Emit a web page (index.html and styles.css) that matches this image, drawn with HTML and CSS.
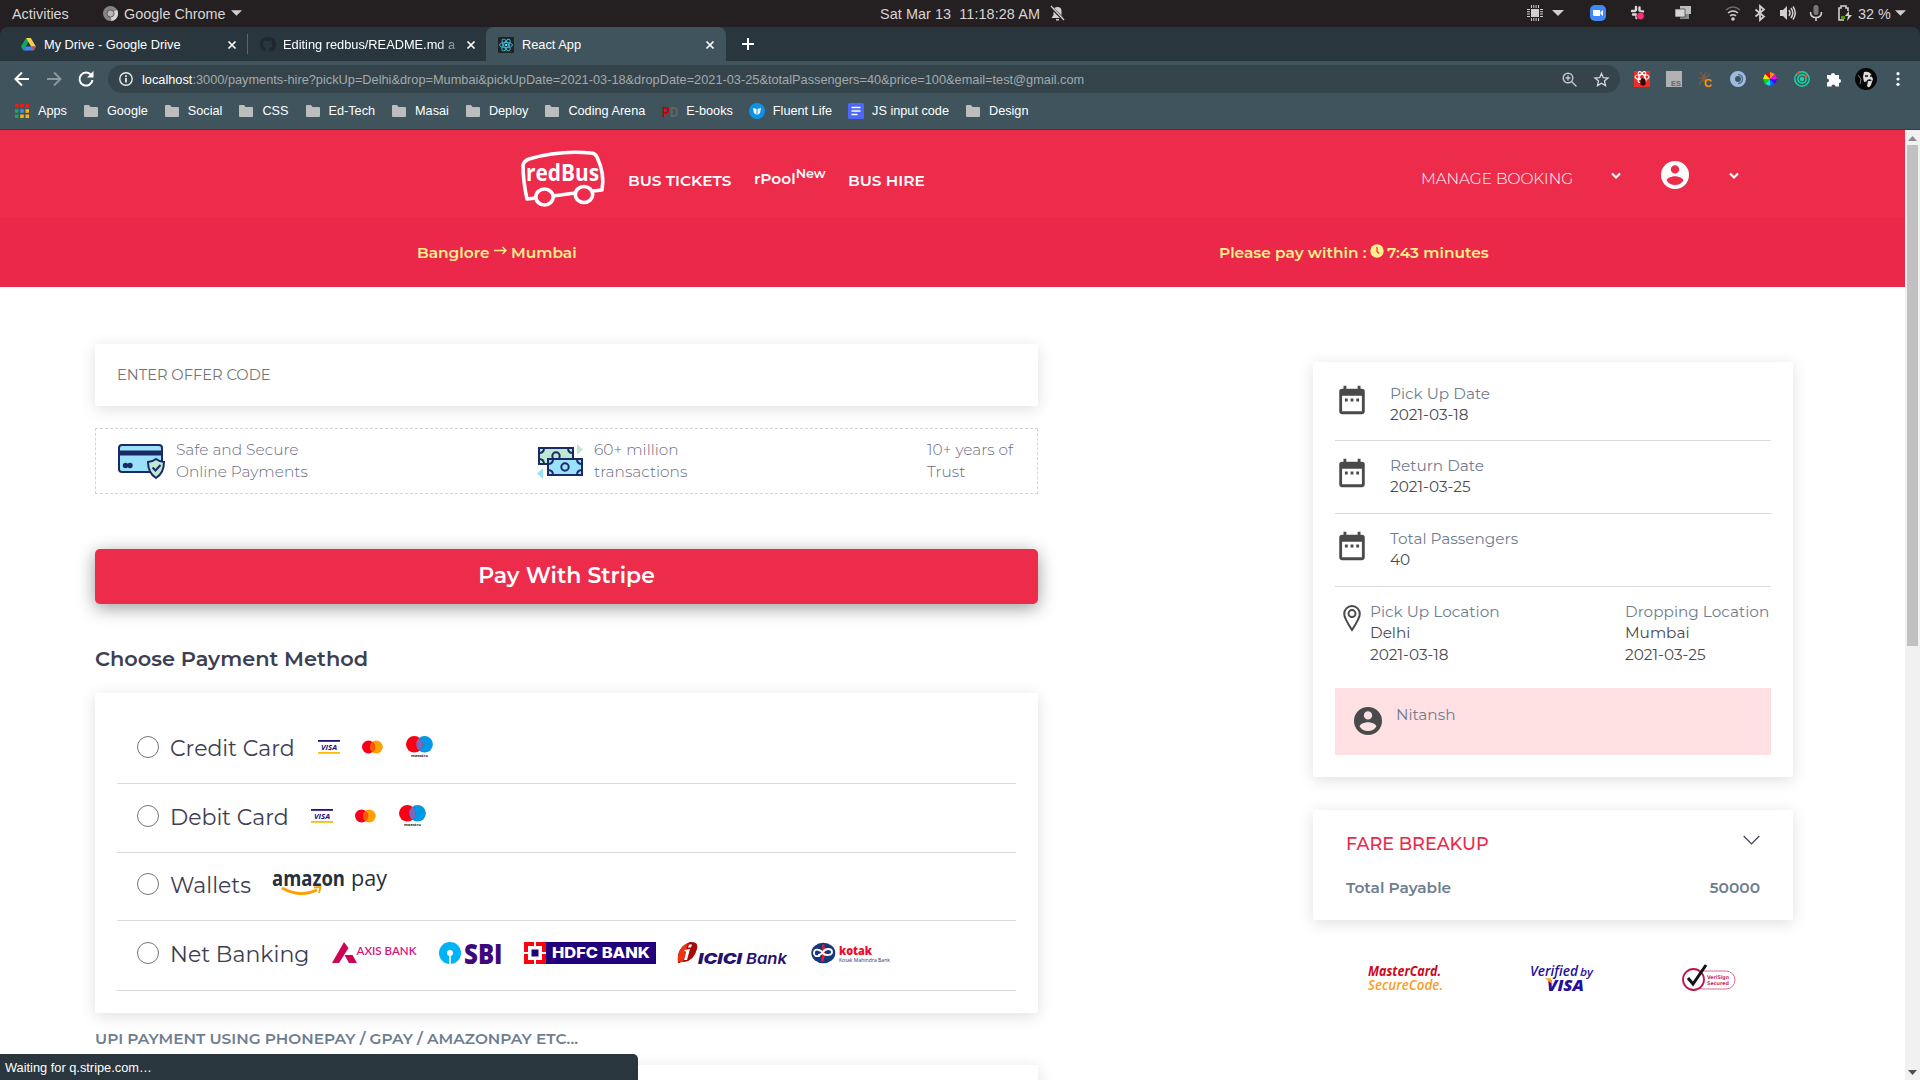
FILE: index.html
```html
<!DOCTYPE html>
<html lang="en">
<head>
<meta charset="utf-8">
<title>React App</title>
<link rel="stylesheet" href="styles.css">
</head>
<body>
<svg class="defs" aria-hidden="true">
  <symbol id="folder" viewBox="0 0 14 14"><path d="M0 2q0-1 1-1h4l1.500 2H13q1 0 1 1v8q0 1-1 1H1q-1 0-1-1z" fill="#bdbdbd"/></symbol>
  <symbol id="close" viewBox="0 0 10 10"><path d="M1.500 1.500l7 7m0-7l-7 7" stroke="#fff" stroke-width="1.700"/></symbol>
  <symbol id="tri" viewBox="0 0 12 8"><path d="M0 1h12L6 7z" fill="#d0cfcf"/></symbol>
  <symbol id="calendar" viewBox="0 0 24 24"><path fill="#4a4a4a" d="M9 11H7v2h2zm4 0h-2v2h2zm4 0h-2v2h2zm2-7h-1V2h-2v2H8V2H6v2H5a2 2 0 0 0-2 2v14a2 2 0 0 0 2 2h14a2 2 0 0 0 2-2V6a2 2 0 0 0-2-2zm0 16H5V9h14z"/></symbol>
  <symbol id="account" viewBox="2 2 20 20"><path fill="currentColor" d="M12 2a10 10 0 1 0 0 20 10 10 0 0 0 0-20zm0 3a3 3 0 1 1 0 6 3 3 0 0 1 0-6zm0 14.200a7.200 7.200 0 0 1-6-3.220c.03-1.990 4-3.080 6-3.080s5.970 1.090 6 3.080a7.200 7.200 0 0 1-6 3.220z"/></symbol>
  <symbol id="down" viewBox="0 0 10 8"><path d="M1 1.500l4 4 4-4" fill="none" stroke="#fff" stroke-width="2.200"/></symbol>
  <symbol id="visa" viewBox="0 0 22 14"><path d="M0 0h22v1.800H0z" fill="#26107a"/><path d="M0 12h22v1.800H0z" fill="#fdbb0a"/><text x="3" y="9.500" textLength="16" lengthAdjust="spacingAndGlyphs" class="logo-visa">VISA</text></symbol>
  <symbol id="mastercard" viewBox="0 0 21 14"><circle cx="14.200" cy="7" r="6.500" fill="#ff9f00"/><circle cx="6.500" cy="7" r="6.500" fill="#f9001a"/><path d="M10.400 1.800a6.500 6.500 0 0 1 0 10.400 6.500 6.500 0 0 1 0-10.400z" fill="#ff5a00"/></symbol>
  <symbol id="maestro" viewBox="0 0 27 22"><circle cx="18.600" cy="8.300" r="8.300" fill="#0099e5"/><circle cx="8.300" cy="8.300" r="8.300" fill="#fb0015"/><path d="M13.400 1.800a8.300 8.300 0 0 1 0 13 8.300 8.300 0 0 1 0-13z" fill="#7a68bd"/><text x="5" y="21" textLength="17" lengthAdjust="spacingAndGlyphs" class="logo-maestro">maestro</text></symbol>
</svg>

<header class="system-bar">
  <span class="activities">Activities</span>
  <svg class="app-icon" viewBox="0 0 16 16"><circle cx="8" cy="8" r="8" fill="#858585"/><path d="M8 8L15 4a8 8 0 0 1-6 12z" fill="#d6d6d6"/><circle cx="8" cy="8" r="3.800" fill="#b8b8b8" stroke="#555"/></svg>
  <span class="app-name">Google Chrome</span>
  <svg class="app-arrow" width="11" height="8"><use href="#tri"/></svg>
  <span class="clock">Sat Mar 13&nbsp; 11:18:28 AM</span>
  <svg class="bell" width="15" height="15" viewBox="0 0 15 15"><path d="M7.500 1a4 4 0 0 1 4 4v4l2 3h-12l2-3V5a4 4 0 0 1 4-4zM6 13h3v1.500H6z" fill="#d0cfcf"/><path d="M0 0l14 14" stroke="#241f21" stroke-width="3"/><path d="M1 0l13 14" stroke="#d0cfcf" stroke-width="1.300"/></svg>
  <div class="tray">
    <svg viewBox="0 0 16 16"><path d="M4 4h8v8H4zM4 0h1v3H4zM6.300 0h1v3h-1zM8.600 0h1v3h-1zM11 0h1v3h-1zM4 13h1v3H4zM6.300 13h1v3h-1zM8.600 13h1v3h-1zM11 13h1v3h-1zM0 4h3v1H0zM0 6.300h3v1H0zM0 8.600h3v1H0zM0 11h3v1H0zM13 4h3v1h-3zM13 6.300h3v1h-3zM13 8.600h3v1h-3zM13 11h3v1h-3z" fill="#d0cfcf"/></svg>
    <svg viewBox="-2 -4 16 16"><path d="M0 1h12L6 7z" fill="#d0cfcf"/></svg>
    <svg viewBox="0 0 16 16"><rect width="16" height="16" rx="5" fill="#4087fc"/><path d="M3 5h7v6H4.500Q3 11 3 9.500zM10.500 7L13 5v6l-2.500-2z" fill="#fff"/></svg>
    <svg viewBox="0 0 16 16"><path d="M6 2v3M9.500 2.500v3M2 6h3M11 6.500h2M3 9.500h3M6.500 10v3" stroke="#dadada" stroke-width="2.400" stroke-linecap="round"/><circle cx="10.500" cy="11" r="3.800" fill="#ff2f73" stroke="#241f21" stroke-width=".6"/></svg>
    <svg viewBox="0 0 16 16"><path d="M5 1h11v8H5z" fill="#bdbdbd"/><path d="M5 9h9v5H5z" fill="#8b8b8b"/><path d="M0 4h10v8H0z" fill="#d5d5d5" stroke="#241f21" stroke-width=".6"/></svg>
    <svg viewBox="0 0 16 16" fill="none" stroke-width="1.600"><path d="M1 5q7-6 14 0" stroke="#6d6a6b"/><path d="M3 8q5-4 10 0M5 11q3-2.500 6 0" stroke="#d0cfcf"/><circle cx="8" cy="14" r="1.800" fill="#d0cfcf"/></svg>
    <svg viewBox="0 0 16 16" fill="none" stroke="#d0cfcf" stroke-width="1.800"><path d="M3.500 4.500l8.500 7L8 15V1l4 3.500-8.500 7"/></svg>
    <svg viewBox="0 0 16 16" fill="none" stroke="#d0cfcf" stroke-width="1.500"><path d="M0 5h3l4-4v14l-4-4H0z" fill="#d0cfcf" stroke="none"/><path d="M9 5q2 3 0 6M11 3q3.500 5 0 10M13 1.500q4.500 6.500 0 13"/></svg>
    <svg viewBox="0 0 16 16" fill="none"><rect x="5.500" y="0" width="5" height="10" rx="2.500" fill="#777"/><path d="M2.500 7q0 5.500 5.500 5.500T13.500 7M8 12v4" stroke="#d0cfcf" stroke-width="1.600"/></svg>
    <svg viewBox="0 0 16 16"><path d="M7 15H2V3h2V1h5v2h2v3" fill="none" stroke="#d0cfcf" stroke-width="1.600"/><path d="M4 11h4v3H4z" fill="#4e9a06"/><path d="M12 6l-4 5h3l-1 5 5-6h-3z" fill="#d0cfcf"/></svg>
    <span class="battery">32 %</span>
    <svg class="last" width="11" height="8"><use href="#tri"/></svg>
  </div>
</header>

<div class="tab-strip">
  <div class="tab tab-drive">
    <svg class="tab-icon" viewBox="0 0 16 16"><path d="M5.500 1h5L5 10.500 2.500 14.500 0 10z" fill="#11a861"/><path d="M5.500 1h5l5.500 9.500h-5z" fill="#ffcf48"/><path d="M5 10h11l-2.500 4.500h-11z" fill="#4285f4"/><path d="M11 10h5l-2.500 4.500z" fill="#ea4335"/></svg>
    <span class="tab-title">My Drive - Google Drive</span>
    <svg width="10" height="10"><use href="#close"/></svg>
  </div>
  <div class="tab tab-github">
    <svg class="tab-icon" viewBox="0 0 16 16"><path fill="#1f282e" d="M8 0a8 8 0 0 0-2.530 15.590c.4.070.55-.17.55-.38v-1.490c-2.010.37-2.530-.49-2.690-.94-.45-1.140-1.130-1.410-.78-1.420.63-.01 1.080.58 1.230.82.720 1.210 1.870.87 2.330.66.070-.52.280-.87.510-1.070-1.780-.2-3.640-.89-3.640-3.950 0-.87.310-1.590.820-2.150-.08-.2-.36-1.020.08-2.120 0 0 .670-.21 2.200.82a7.500 7.500 0 0 1 4 0c1.530-1.040 2.200-.82 2.200-.82.440 1.100.160 1.920.080 2.120.51.56.820 1.270.820 2.150 0 3.070-1.870 3.750-3.650 3.950.29.25.540.730.540 1.480v2.190c0 .210.150.460.550.380A8 8 0 0 0 8 0z"/></svg>
    <span class="tab-title">Editing redbus/README.md a</span>
    <svg width="10" height="10"><use href="#close"/></svg>
  </div>
  <div class="tab tab-active">
    <svg class="tab-icon" viewBox="0 0 16 16"><rect width="16" height="16" rx="1" fill="#222"/><g fill="none" stroke="#3cc3e0" stroke-width=".9"><ellipse cx="8" cy="8" rx="6.500" ry="2.600"/><ellipse cx="8" cy="8" rx="6.500" ry="2.600" transform="rotate(60 8 8)"/><ellipse cx="8" cy="8" rx="6.500" ry="2.600" transform="rotate(120 8 8)"/></g><circle cx="8" cy="8" r="1.300" fill="#5bdcf5"/></svg>
    <span class="tab-title">React App</span>
    <svg width="10" height="10"><use href="#close"/></svg>
  </div>
  <svg class="plus" width="12" height="12"><path d="M6 0v12M0 6h12" stroke="#fff" stroke-width="2"/></svg>
</div>

<div class="toolbar">
  <svg viewBox="0 0 16 16" fill="none" stroke="#fff" stroke-width="2"><path d="M15 8H2M8 1.500L1.500 8 8 14.500"/></svg>
  <svg viewBox="0 0 16 16" fill="none" stroke="#8b989e" stroke-width="2"><path d="M1 8h13M8 1.500L14.500 8 8 14.500"/></svg>
  <svg viewBox="0 0 16 16" fill="none" stroke="#fff" stroke-width="2"><path d="M13.500 4.500A6.500 6.500 0 1 0 14.500 9"/><path d="M15.500 0v6.500H9z" fill="#fff" stroke="none"/></svg>
  <div class="omnibox">
    <svg width="14" height="14" viewBox="0 0 14 14"><circle cx="7" cy="7" r="6.200" fill="none" stroke="#e8eaeb" stroke-width="1.400"/><path d="M6.200 6h1.600v4.500H6.200zM6.200 3.300h1.600v1.600H6.200z" fill="#fff"/></svg>
    <span class="url"><b>localhost</b>:3000/payments-hire?pickUp=Delhi&amp;drop=Mumbai&amp;pickUpDate=2021-03-18&amp;dropDate=2021-03-25&amp;totalPassengers=40&amp;price=100&amp;email=test@gmail.com</span>
    <svg width="15" height="15" viewBox="0 0 15 15" fill="none" stroke="#c3c8ca" stroke-width="1.400"><circle cx="6" cy="6" r="4.800"/><path d="M9.500 9.500l5 5M3.500 6h5M6 3.500v5"/></svg>
    <svg class="star" width="15" height="15" viewBox="0 0 15 15" fill="none" stroke="#d5d9da" stroke-width="1.300"><path d="M7.500 1.500l1.800 4.200 4.700.4-3.500 3 1 4.500-4-2.400-4 2.400 1-4.500-3.500-3 4.700-.4z"/></svg>
  </div>
  <div class="extensions">
    <svg viewBox="0 0 16 16"><path d="M0 0h16v16H0z" fill="#f02c27"/><g fill="none" stroke="#fff" stroke-width="1.200"><ellipse cx="8" cy="6" rx="7" ry="2.500"/><ellipse cx="8" cy="6" rx="6" ry="2.500" transform="rotate(60 8 6)"/><ellipse cx="8" cy="6" rx="6" ry="2.500" transform="rotate(120 8 6)"/></g><ellipse cx="9" cy="11" rx="2.800" ry="3.800" fill="#2b0b08"/></svg>
    <svg viewBox="0 0 16 16"><path d="M0 0h16v16H0z" fill="#b1b1b1"/><text x="5" y="14.500" textLength="10" lengthAdjust="spacingAndGlyphs" class="ext-es">ES</text></svg>
    <svg viewBox="0 0 16 16"><path d="M2 1l3 4M8 1L6 5M0 7h4M1 14l3-5M12 3L8 6" stroke="#7a5c48" stroke-width="1.200"/><ellipse cx="6" cy="7.500" rx="2.500" ry="3.500" fill="#80583e"/><text x="6" y="15.500" class="ext-c">C</text></svg>
    <svg viewBox="0 0 16 16"><circle cx="8" cy="8" r="5.500" fill="none" stroke="#9fbbdc" stroke-width="5"/><path d="M8 3.500a4.500 4.500 0 0 1 0 9" fill="none" stroke="#4c6f9d" stroke-width="1.500"/></svg>
    <svg viewBox="0 0 16 16"><path d="M8 8V1l5 2z" fill="#f90"/><path d="M8 8V1L3 3z" fill="#f00"/><path d="M8 8L3 3 1 8z" fill="#e6f000"/><path d="M8 8H1l2 5z" fill="#0d0"/><path d="M8 8l-5 5 5 2z" fill="#0ec"/><path d="M8 8v7l5-2z" fill="#06f"/><path d="M8 8l5 5 2-5z" fill="#40f"/><path d="M8 8h7l-2-5z" fill="#f0f"/></svg>
    <svg viewBox="0 0 16 16" fill="none" stroke="#16d5a6" stroke-width="1.500"><circle cx="8" cy="8" r="7.200"/><circle cx="8" cy="8" r="4.200"/><circle cx="8" cy="8" r="1.500" fill="#16d5a6"/><circle cx="4.500" cy="2" r="1.500" fill="#f4511e" stroke="none"/><circle cx="12" cy="5" r="1.500" fill="#f4511e" stroke="none"/></svg>
    <svg viewBox="0 0 16 16"><path d="M1 4h4a2 2 0 1 1 4 0h4v4a2 2 0 1 1 0 4v3.500H9.500a2 2 0 1 0-4 0H1v-4a2 2 0 1 0 0-4z" fill="#fff"/></svg>
    <svg class="avatar" viewBox="0 0 22 22"><circle cx="11" cy="11" r="11" fill="#070707"/><path d="M9 4q7-1 8 5l1 2-2 6q-2 4-4 1l1-5-4 1-1-5z" fill="#ddd"/><path d="M10 8h3M15 8h2M12 13q3-2 4 0" stroke="#111" stroke-width="1.500"/><path d="M3 7l3 4-1 5" stroke="#777" fill="none"/></svg>
    <svg viewBox="0 0 16 16" fill="#fff"><circle cx="8" cy="2.700" r="1.600"/><circle cx="8" cy="8" r="1.600"/><circle cx="8" cy="13.300" r="1.600"/></svg>
  </div>
</div>

<nav class="bookmarks">
  <a class="apps"><svg viewBox="0 0 14 14"><path d="M0 0h3.500v3.500H0zM5.200 0h3.500v3.500H5.200zM10.500 0H14v3.500h-3.500z" fill="#ee1c12"/><path d="M0 5.200h3.500v3.500H0zM0 10.500h3.500V14H0z" fill="#1da462"/><path d="M5.200 5.200h3.500v3.500H5.200z" fill="#4688f1"/><path d="M10.500 5.200H14v3.500h-3.500zM5.200 10.500h3.500V14H5.200zM10.500 10.500H14V14h-3.500z" fill="#fbb30d"/></svg>Apps</a>
  <a><svg><use href="#folder"/></svg>Google</a>
  <a><svg><use href="#folder"/></svg>Social</a>
  <a><svg><use href="#folder"/></svg>CSS</a>
  <a><svg><use href="#folder"/></svg>Ed-Tech</a>
  <a><svg><use href="#folder"/></svg>Masai</a>
  <a><svg><use href="#folder"/></svg>Deploy</a>
  <a><svg><use href="#folder"/></svg>Coding Arena</a>
  <a class="wide"><svg viewBox="0 0 16 16"><text x="0" y="13.500" textLength="8" lengthAdjust="spacingAndGlyphs" class="pd-p">P</text><text x="8" y="13.500" textLength="8" lengthAdjust="spacingAndGlyphs" class="pd-d">D</text></svg>E-books</a>
  <a class="wide"><svg viewBox="0 0 16 16"><circle cx="8" cy="8" r="8" fill="#0d92e8"/><path d="M4 5l3.500 1v6L5 10zM12 5L8.500 6v6l2.500-2z" fill="#fff"/></svg>Fluent Life</a>
  <a class="wide"><svg viewBox="0 0 16 16"><rect width="16" height="16" rx="1.500" fill="#4d67fb"/><path d="M3.500 4.500h9M3.500 8h9M3.500 11.500h6" stroke="#fff" stroke-width="1.700"/></svg>JS input code</a>
  <a><svg><use href="#folder"/></svg>Design</a>
</nav>

<div class="viewport">
  <div class="page">
    <div class="site-nav">
      <svg class="logo" viewBox="0 0 84 56"><g fill="none" stroke="#fff" stroke-width="3.600" stroke-linejoin="round"><path d="M15 47L6 48Q2 30 2 14Q3 10 8 8Q38-1 70 2Q74 2 76 6Q84 23 81 39L72 40"/><path d="M32 45L54 42"/><ellipse cx="23.500" cy="46" rx="8.700" ry="8"/><ellipse cx="63" cy="43.500" rx="8.700" ry="8"/></g><text x="5" y="29.500" textLength="73" lengthAdjust="spacingAndGlyphs" class="logo-red">redBus</text></svg>
      <a class="nav-tickets">BUS TICKETS</a>
      <a class="nav-rpool">rPool<sup>New</sup></a>
      <a class="nav-hire">BUS HIRE</a>
      <a class="nav-manage">MANAGE BOOKING</a>
      <svg class="nav-down" width="10" height="8"><use href="#down"/></svg>
      <svg class="nav-user" width="28" height="28"><use href="#account"/></svg>
      <svg class="nav-down" width="10" height="8"><use href="#down"/></svg>
    </div>
    <div class="trip-bar">
      <span class="from">Banglore</span>
      <svg width="13" height="9" viewBox="0 0 13 9" fill="none" stroke="#fff08b" stroke-width="1.400"><path d="M0 4.500h12M8.500 1L12 4.500 8.500 8"/></svg>
      <span class="to">Mumbai</span>
      <span class="within">Please pay within :</span>
      <svg width="14" height="14" viewBox="0 0 14 14"><circle cx="7" cy="7" r="6.700" fill="#fff08b"/><path d="M7 3v4.500l2 2" fill="none" stroke="#eb2849" stroke-width="1.200"/></svg>
      <span class="left-time">7:43 minutes</span>
    </div>

    <main class="columns">
      <section class="payment">
        <div class="card offer">ENTER OFFER CODE</div>
        <div class="trust">
          <svg width="47" height="35" viewBox="0 0 47 35"><rect x="1" y="1" width="43" height="27" rx="3" fill="#9ce1fb" stroke="#1b2a66" stroke-width="2"/><path d="M1 6.500h43v5H1z" fill="#1b2a66"/><circle cx="7.500" cy="21.500" r="2.700" fill="#1b2a66"/><circle cx="12" cy="21.500" r="2.700" fill="#1b2a66"/><path d="M38 15q4 3 8 3 0 11-8 16-8-5-8-16 4 0 8-3z" fill="#bde9d4" stroke="#1b2a66" stroke-width="2"/><path d="M34.500 23.500l3 3 5-5.500" fill="none" stroke="#1b2a66" stroke-width="2"/></svg>
          <span class="trust-secure">Safe and Secure<br>Online Payments</span>
          <svg width="46" height="36" viewBox="0 0 46 36"><path d="M40 0l6 5.500-6 5.500z" fill="#bde9d4"/><path d="M6 24v11L0 29.500z" fill="#9ce1fb"/><g stroke="#1b2a66" stroke-width="2" fill="none"><path d="M2 4h34v16H2z" fill="#bde9d4"/><path d="M2 9q5 0 5-5M36 9q-5 0-5-5M2 15q5 0 5 5"/><circle cx="19" cy="12" r="3.700"/><path d="M11 15h34v16H11z" fill="#9ce1fb"/><path d="M11 20q5 0 5-5M45 20q-5 0-5-5M11 26q5 0 5 5M45 26q-5 0-5 5"/><circle cx="28" cy="23" r="3.700"/></g></svg>
          <span class="trust-million">60+ million<br>transactions</span>
          <span class="trust-years">10+ years of<br>Trust</span>
        </div>
        <button class="stripe">Pay With Stripe</button>
        <h2>Choose Payment Method</h2>
        <div class="card methods">
          <label class="method"><i class="radio"></i><span class="credit">Credit Card</span><svg class="m-visa"><use href="#visa"/></svg><svg class="m-master"><use href="#mastercard"/></svg><svg class="m-maestro"><use href="#maestro"/></svg></label>
          <label class="method"><i class="radio"></i><span class="debit">Debit Card</span><svg class="m-visa"><use href="#visa"/></svg><svg class="m-master"><use href="#mastercard"/></svg><svg class="m-maestro"><use href="#maestro"/></svg></label>
          <label class="method method-short"><i class="radio"></i><span class="wallets">Wallets</span><svg class="m-amazon" viewBox="0 0 116 26"><text x="0" y="14.500" textLength="73" lengthAdjust="spacingAndGlyphs" class="logo-amazon">amazon</text><text x="79" y="14.500" textLength="36" lengthAdjust="spacingAndGlyphs" class="logo-pay">pay</text><path d="M10 17q18 10 35 2" fill="none" stroke="#ff9f00" stroke-width="2.800"/><path d="M42 16.500l6.500-.5-1.500 6" fill="none" stroke="#ff9f00" stroke-width="1.800"/></svg></label>
          <label class="method"><i class="radio"></i><span class="netbank">Net Banking</span>
            <svg class="m-axis" viewBox="0 0 85 22"><path d="M12 0l4.500 6-9.500 15H0z" fill="#cf0355"/><path d="M12.500 13h8L25 21h-8z" fill="#cf0355"/><text x="24.500" y="13" textLength="60" lengthAdjust="spacingAndGlyphs" class="logo-axis">AXIS BANK</text></svg>
            <svg class="m-sbi" viewBox="0 0 63 22"><circle cx="11" cy="11" r="11" fill="#00b2f6"/><circle cx="11" cy="11" r="3" fill="#fff"/><path d="M10.200 11h1.600v11h-1.600z" fill="#fff"/><text x="25" y="21.500" textLength="38.500" lengthAdjust="spacingAndGlyphs" class="logo-sbi">SBI</text></svg>
            <svg class="m-hdfc" viewBox="0 0 132 22"><path d="M0 0h132v22H0z" fill="#22007c"/><path d="M0 0h22v22H0z" fill="#fb0410"/><path d="M4 4h14v14H4zM10 0h2v22h-2zM0 10h22v2H0z" fill="#fff"/><path d="M7.500 7.500h7v7h-7z" fill="#22007c"/><text x="28" y="16.300" textLength="98" lengthAdjust="spacingAndGlyphs" class="logo-hdfc">HDFC BANK</text></svg>
            <svg class="m-icici" viewBox="0 0 110 22"><path d="M0 21Q-2 5 12 0 21-1 19 7 16 19 6 20q-3-1-4 1z" fill="#a70a08"/><path d="M0 20Q-1 6 10 1L5 20q-3-1-5 0z" fill="#ef3510"/><path d="M6 8l6-1-3 11H6l2-8zM11 2.500h3l-1 3h-3z" fill="#fff"/><text x="20" y="21.500" textLength="44" lengthAdjust="spacingAndGlyphs" class="logo-icici">ICICI</text><text x="68" y="21.500" textLength="41" lengthAdjust="spacingAndGlyphs" class="logo-bank">Bank</text></svg>
            <svg class="m-kotak" viewBox="0 0 80 22"><ellipse cx="12.300" cy="11" rx="12" ry="10.300" fill="#17377c"/><path d="M12 2.500q2 8-1 17" fill="none" stroke="#ed1c24" stroke-width="2.500"/><path d="M9 13.500q-6 2-6-2.500t5-3q3 1 4 3t4 2q5 0 5-3t-4-3q-3 0-5 3t-5 3" fill="none" stroke="#fff" stroke-width="1.900"/><text x="28" y="13" textLength="33" lengthAdjust="spacingAndGlyphs" class="logo-kotak">kotak</text><text x="28" y="20" textLength="51" lengthAdjust="spacingAndGlyphs" class="logo-mahindra">Kotak Mahindra Bank</text></svg>
          </label>
        </div>
        <p class="upi">UPI PAYMENT USING PHONEPAY / GPAY / AMAZONPAY ETC...</p>
        <div class="card upi-card"></div>
      </section>

      <aside class="summary">
        <div class="card details">
          <div class="date-row"><svg width="34" height="34"><use href="#calendar"/></svg><p><em>Pick Up Date</em>2021-03-18</p></div>
          <div class="date-row"><svg width="34" height="34"><use href="#calendar"/></svg><p><em>Return Date</em>2021-03-25</p></div>
          <div class="date-row"><svg width="34" height="34"><use href="#calendar"/></svg><p><em>Total Passengers</em>40</p></div>
          <div class="place-row">
            <svg width="18" height="27" viewBox="0 0 18 27" fill="none" stroke="#4a4a4a" stroke-width="2"><path d="M9 1a7.800 7.800 0 0 1 7.800 8q0 4-7.800 16Q1.200 13 1.200 9A7.800 7.800 0 0 1 9 1z"/><circle cx="9" cy="8.600" r="3.500"/></svg>
            <p><em>Pick Up Location</em>Delhi<br>2021-03-18</p>
            <p class="drop"><em>Dropping Location</em>Mumbai<br>2021-03-25</p>
          </div>
          <div class="passenger"><svg width="28" height="28"><use href="#account"/></svg><em>Nitansh</em></div>
        </div>
        <div class="card fare">
          <div class="fare-head"><h3>FARE BREAKUP</h3><svg width="17" height="10" viewBox="0 0 17 10"><path d="M.7 1l7.800 7.800L16.300 1" fill="none" stroke="#3e3e52" stroke-width="1.200"/></svg></div>
          <div class="fare-total"><span>Total Payable</span><span>50000</span></div>
        </div>
        <div class="badges">
          <svg width="76" height="28" viewBox="0 0 76 28"><text x="0" y="12" textLength="73" lengthAdjust="spacingAndGlyphs" class="badge-text badge-red">MasterCard.</text><text x="0" y="26" textLength="75" lengthAdjust="spacingAndGlyphs" class="badge-text badge-orange">SecureCode.</text></svg>
          <svg class="verified" width="63" height="28" viewBox="0 0 63 28"><text x="0" y="12" textLength="48" lengthAdjust="spacingAndGlyphs" class="badge-text badge-blue">Verified</text><text x="50" y="12" textLength="13" lengthAdjust="spacingAndGlyphs" class="badge-by">by</text><text x="17" y="26.500" textLength="37" lengthAdjust="spacingAndGlyphs" class="badge-text badge-visa">VISA</text><path d="M15 14.300h6l1.500 6z" fill="#f9a51a"/></svg>
          <svg width="54" height="28" viewBox="0 0 54 28"><rect x="12" y="7" width="41" height="18" rx="9" fill="#fff" stroke="#dc6c8e"/><circle cx="11.500" cy="15.500" r="10.500" fill="#fff" stroke="#c2114e" stroke-width="1.800"/><path d="M6 14l5 6L24 1" fill="none" stroke="#111" stroke-width="3"/><text x="25" y="14.500" textLength="22" lengthAdjust="spacingAndGlyphs" class="badge-sign">VeriSign</text><text x="25" y="20.500" textLength="22" lengthAdjust="spacingAndGlyphs" class="badge-sign">Secured</text></svg>
        </div>
      </aside>
    </main>
  </div>
  <div class="scrollbar">
    <svg width="9" height="6"><path d="M0 6l4.500-5L9 6z" fill="#8a8a8a"/></svg>
    <div class="thumb"></div>
    <svg width="9" height="6"><path d="M0 0l4.500 5L9 0z" fill="#505050"/></svg>
  </div>
</div>
<div class="status">Waiting for q.stripe.com…</div>
</body>
</html>
```

FILE: styles.css
```css
* { box-sizing: border-box; }
body { margin: 0; width: 1920px; height: 1080px; overflow: hidden; display: flex; flex-direction: column; background: #241f21; font-family: "Liberation Sans", Arial, sans-serif; font-size: 12.8px; color: #fff; }
svg { display: block; flex: none; overflow: visible; }
p, h2, h3 { margin: 0; }
em, i { font-style: normal; }
.defs { display: none; }

.system-bar { height: 27px; flex: none; display: flex; align-items: center; background: #241f21; color: #d7d5d5; font-size: 14.400px; padding: 1px 0 0 12px; white-space: nowrap; }
.activities { width: 91px; }
.app-icon { width: 15px; height: 15px; margin: -2px 6px 0 0; }
.app-name { width: 103px; }
.app-arrow { margin: -3px 0 0 4px; }
.clock { margin-left: 638px; width: 161px; letter-spacing: .08px; }
.bell { margin: -2px 0 0 9px; }
.tray { display: flex; align-items: center; margin-left: auto; padding-right: 14px; }
.tray svg { width: 16px; height: 16px; margin-right: 12px; margin-top: -2px; }
.tray svg:nth-child(1) { margin-right: 7px; }
.tray svg:nth-child(2), .tray svg:nth-child(3) { margin-right: 24px; }
.tray svg:nth-child(4) { margin-right: 29px; }
.tray svg:nth-child(5) { margin-right: 34px; }
.tray svg:nth-child(6) { margin-right: 11px; }
.tray svg:nth-child(9) { margin-right: 13px; }
.tray svg:nth-child(10) { margin-right: 5px; }
.battery { width: 32px; }
.tray svg.last { width: 11px; height: 8px; margin: -3px 0 0 5px; }

.tab-strip { height: 34px; flex: none; display: flex; background: #29363d; border-radius: 8px 8px 0 0; }
.tab { display: flex; align-items: center; height: 34px; padding-top: 1px; }
.tab-drive { width: 248px; padding-left: 21px; padding-right: 11px; background: linear-gradient(#5a666c, #5a666c) right center / 1px 20px no-repeat; }
.tab-icon { width: 15px; height: 15px; margin-right: 8px; }
.tab-title { flex: 1; white-space: nowrap; }
.tab-github { width: 238px; padding-left: 12px; padding-right: 10px; }
.tab-github .tab-title { margin-right: 8px; -webkit-mask-image: linear-gradient(90deg, #000 88%, transparent 105%); mask-image: linear-gradient(90deg, #000 88%, transparent 105%); }
.tab-active { width: 240px; background: #40545e; border-radius: 8px 8px 0 0; padding-left: 12px; padding-right: 11px; }
.tab-active .tab-icon { width: 16px; height: 16px; }
.plus { margin: 11px 0 0 16px; }

.toolbar { height: 36px; flex: none; display: flex; align-items: center; background: #40545e; padding-left: 14px; }
.toolbar > svg { width: 16px; height: 16px; margin-right: 16px; }
.toolbar > svg:nth-child(3) { margin-right: 14px; }
.omnibox { width: 1512px; height: 28px; border-radius: 14px; background: #35444a; display: flex; align-items: center; padding: 0 11px; }
.url { margin-left: 9px; flex: 1; color: #a2aaad; font-size: 12.770px; white-space: nowrap; }
.url b { font-weight: 400; color: #fff; }
.omnibox .star { margin-left: 17px; }
.extensions { display: flex; align-items: center; gap: 16px; padding-left: 14px; }
.extensions svg { width: 16px; height: 16px; }
.extensions .avatar { width: 22px; height: 22px; margin: 0 -3px; }
.ext-es { font: bold 8px "Liberation Sans", sans-serif; fill: #666; }
.ext-c { font: bold 11px "Liberation Sans", sans-serif; fill: #ff9800; }

.bookmarks { height: 33px; flex: none; display: flex; align-items: center; background: #40545e; padding: 0 0 4px 15px; border-bottom: 1px solid #303f46; font-size: 12.700px; }
.bookmarks a { display: flex; align-items: center; white-space: nowrap; margin-right: 17px; }
.bookmarks svg { width: 14px; height: 14px; margin-right: 9px; }
.bookmarks .wide { margin-right: 16px; }
.bookmarks .wide svg { width: 16px; height: 16px; margin-right: 8px; }
.bookmarks a:last-child { margin-left: 1px; }
.pd-p { font: bold 15px "Liberation Sans", sans-serif; fill: #c40000; }
.pd-d { font: bold 15px "Liberation Sans", sans-serif; fill: #666; }

.viewport { flex: 1; min-height: 0; display: flex; }
.page { width: 1905px; height: 950px; overflow: hidden; background: #fff; color: #3e3e52; font-family: Montserrat, Inter, sans-serif; font-size: 15.400px; }
.scrollbar { width: 15px; background: #f1f1f1; display: flex; flex-direction: column; align-items: center; padding: 5px 0 4px; }
.thumb { width: 11px; height: 501px; margin: 4px 0 auto; background: #c1c1c1; }

.site-nav { height: 87px; background: #ed2b4b; color: #fff; display: flex; align-items: center; padding-left: 521px; font-weight: 600; white-space: nowrap; }
.logo { width: 84px; height: 56px; margin: 10px 23px 0 0; }
.logo-red { font: bold 23px "Open Sans", sans-serif; fill: #fff; }
.nav-tickets { width: 126px; margin-top: 13px; }
.nav-rpool { width: 94px; margin-top: 9px; }
.nav-rpool sup { font-size: 12.800px; line-height: 0; vertical-align: 6px; }
.nav-hire { width: 573px; margin-top: 13px; }
.nav-manage { width: 190px; margin-top: 10px; font-weight: 300; }
.nav-down { margin-top: 5px; }
.nav-user { margin: 2px 40px 0; color: #fff; }
.trip-bar { height: 70px; background: #eb2849; color: #fff08b; font-weight: 600; display: flex; align-items: center; padding: 1px 0 0 417px; white-space: nowrap; }
.trip-bar svg { margin-top: -4px; }
.from { width: 77px; }
.to { margin-left: 4px; width: 708px; }
.within { width: 151px; }
.left-time { margin-left: 3px; }

.columns { display: flex; padding-left: 95px; }
.card { background: #fff; border-radius: 2px; box-shadow: 0 3px 16px rgba(0, 0, 0, .13); }
.payment { width: 943px; padding-top: 57px; }
.offer { height: 62px; padding: 0 22px; line-height: 62px; font-size: 14.670px; color: #757575; }
.trust { height: 66px; margin-top: 22px; border: 1px dashed #d5d5d8; padding: 10px 22px; display: flex; font-weight: 300; line-height: 22px; color: #6b6b80; white-space: nowrap; }
.trust svg { margin-top: 5px; }
.trust-secure { margin-left: 11px; width: 361px; }
.trust-million { margin-left: 11px; width: 333px; }
.stripe { display: block; width: 100%; height: 55px; margin-top: 55px; border: 0; padding: 0 0 2px; border-radius: 5px; background: #ed2b4b; color: #fff; font: 600 22px Montserrat, Inter, sans-serif; box-shadow: 0 4px 18px rgba(0, 0, 0, .4); }
h2 { margin-top: 41px; font-size: 20.900px; line-height: 28px; font-weight: 600; }
.methods { margin-top: 20px; height: 320px; padding: 22px 22px 0; }
.method { display: flex; align-items: center; height: 69px; border-bottom: 1px solid #dadcdc; padding: 0 0 5px 20px; font-size: 22px; white-space: nowrap; }
.method span { margin-top: 3px; }
.method-short { height: 68px; }
.method:last-child { height: 70px; }
.radio { width: 22px; height: 22px; border: 1px solid #767676; border-radius: 50%; margin-right: 11px; }
.credit { width: 148px; }
.debit { width: 141px; }
.wallets { width: 102px; }
.netbank { width: 162px; }
.m-visa { width: 22px; height: 14px; margin-right: 22px; }
.m-master { width: 21px; height: 14px; margin-right: 23px; }
.m-maestro { width: 27px; height: 22px; }
.m-amazon { width: 116px; height: 26px; margin-top: -1px; }
.m-axis { width: 85px; height: 22px; margin-right: 22px; }
.m-sbi { width: 63px; height: 22px; margin-right: 22px; }
.m-hdfc { width: 132px; height: 22px; margin-right: 22px; }
.m-icici { width: 110px; height: 22px; margin-right: 23px; }
.m-kotak { width: 80px; height: 22px; }
.logo-visa { font: italic bold 7.500px "Open Sans", sans-serif; fill: #26107a; }
.logo-maestro { font: bold 4px "Open Sans", sans-serif; fill: #222; }
.logo-amazon { font: bold 22px "Open Sans", sans-serif; fill: #24303d; }
.logo-pay { font: 22px "Open Sans", sans-serif; fill: #24303d; }
.logo-axis { font: 600 11px Lato, sans-serif; fill: #dc0f7d; }
.logo-sbi { font: 800 29px "Open Sans", sans-serif; fill: #3d087b; }
.logo-hdfc { font: 800 14.500px Inter, sans-serif; fill: #fff; }
.logo-icici { font: italic 900 15px Inter, sans-serif; fill: #28106e; }
.logo-bank { font: italic 600 15px Inter, sans-serif; fill: #28106e; }
.logo-kotak { font: 800 12px "Open Sans", sans-serif; fill: #ed0b2d; }
.logo-mahindra { font: 5.500px "Open Sans", sans-serif; fill: #17377c; }
.upi { margin-top: 15px; font-weight: 600; line-height: 22px; color: #6f7d90; white-space: nowrap; }
.upi-card { margin-top: 15px; height: 80px; }

.summary { margin-left: 275px; padding-top: 75px; width: 480px; }
.details { height: 415px; padding: 5px 22px 22px; color: #4a4a4a; font-size: 15.300px; }
.details em { display: block; color: #6f7d90; }
.details p { line-height: 21px; white-space: nowrap; }
.date-row { height: 73px; border-bottom: 1px solid #dadcdc; display: flex; padding-top: 14px; }
.date-row svg { margin: 1px 21px 0 0; }
.date-row:first-child { height: 74px; padding-top: 16px; }
.date-row:first-child svg { margin-top: 0; }
.place-row { display: flex; padding: 14px 0 0 8px; height: 101px; }
.place-row p { line-height: 22px; }
.place-row em { line-height: 21px; }
.place-row svg { margin: 4px 9px 0 0; }
.place-row .drop { margin-left: auto; width: 146px; }
.passenger { height: 67px; background: #ffe1e3; padding: 19px 0 0 19px; display: flex; }
.passenger em { margin: -2px 0 0 14px; }
.fare { margin-top: 33px; height: 110px; padding: 22px 33px; }
.fare-head, .fare-total { display: flex; justify-content: space-between; }
.fare-head svg { margin-top: 3px; }
h3 { font-size: 17.600px; line-height: 24px; font-weight: 500; color: #eb2849; }
.fare-total { margin-top: 21px; font-weight: 600; line-height: 22px; color: #6f7d90; }
.badges { margin: 44px 57px 0 55px; display: flex; justify-content: space-between; }
.verified { margin-left: -3px; }
.badge-text { font: italic bold 15px "Open Sans", sans-serif; }
.badge-red { fill: #cc0820; }
.badge-orange { fill: #f99d26; font-weight: 600; }
.badge-blue { fill: #25109b; font-weight: 600; }
.badge-visa { fill: #25109b; font-size: 16px; font-weight: 800; }
.badge-by { font: italic 600 11px "Open Sans", sans-serif; fill: #25109b; }
.badge-sign { font: bold 5px "DejaVu Sans", sans-serif; fill: #cc2c60; }

.status { position: absolute; left: 0; bottom: 0; width: 638px; height: 26px; background: #29363d; border-top-right-radius: 5px; line-height: 27px; padding-left: 5px; color: #fff; font-size: 12.800px; }
```
